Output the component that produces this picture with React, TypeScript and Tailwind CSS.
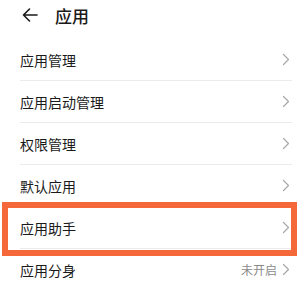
import React from 'react';

interface Item {
  label: string;
  value?: string;
  highlighted?: boolean;
}

const items: Item[] = [
  { label: '应用管理' },
  { label: '应用启动管理' },
  { label: '权限管理' },
  { label: '默认应用' },
  { label: '应用助手', highlighted: true },
  { label: '应用分身', value: '未开启' },
];

function Chevron() {
  return (
    <svg width="8" height="13" viewBox="0 0 8 13" fill="none" className="shrink-0">
      <path d="M1.5 1.5 L6.5 6.5 L1.5 11.5" stroke="#a8a8a8" strokeWidth="1.2" strokeLinecap="round" strokeLinejoin="round" />
    </svg>
  );
}

function BackArrow() {
  return (
    <svg width="16" height="14" viewBox="0 0 16 14" fill="none">
      <path d="M15 7 H1.5 M7.5 1 L1.5 7 L7.5 13" stroke="#1a1a1a" strokeWidth="1.6" strokeLinecap="round" strokeLinejoin="round" />
    </svg>
  );
}

export default function App() {
  return (
    <div
      className="w-[300px] h-[284px] overflow-hidden bg-white text-[#1a1a1a]"
      style={{ fontFamily: '"Noto Sans CJK SC", "Noto Sans", sans-serif' }}
    >
      {/* Header */}
      <div className="h-[30px] flex items-center pl-[22px]">
        <BackArrow />
        <span className="ml-[17px] text-[17px] font-medium leading-none">应用</span>
      </div>

      {/* List */}
      <div className="mt-[9px]">
        {items.map((item, i) => (
          <div key={item.label} className="relative">
            <div className="h-[41px] flex items-center justify-between pl-[20px] pr-[10px]">
              <span className="text-[14px] leading-none">{item.label}</span>
              <div className="flex items-center gap-[5px]">
                {item.value && <span className="text-[12px] text-[#8a8a8a] leading-none">{item.value}</span>}
                <Chevron />
              </div>
            </div>
            {i < items.length - 1 && <div className="ml-[20px] mr-[8px] h-px bg-[#ebebeb]" />}
            {item.highlighted && (
              <div className="absolute -top-[5px] left-[2px] right-[3px] h-[54px] border-[6px] border-[#f4683a] pointer-events-none" />
            )}
          </div>
        ))}
      </div>
    </div>
  );
}
